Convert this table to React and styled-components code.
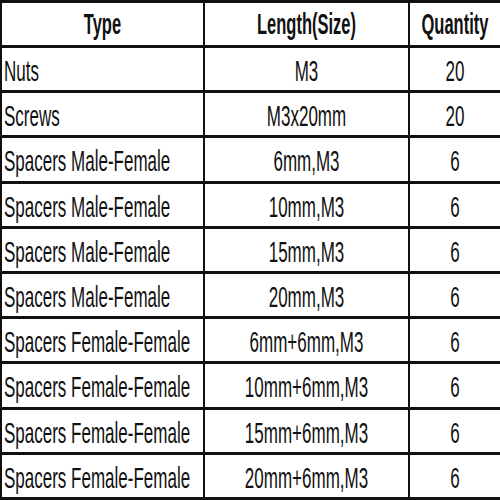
import React from 'react';
import styled, { createGlobalStyle } from 'styled-components';

const GlobalStyle = createGlobalStyle`
  html, body {
    margin: 0;
    padding: 0;
    background: #ffffff;
  }
`;

const Table = styled.table`
  width: 500px;
  height: 500px;
  border-collapse: separate;
  border-spacing: 0;
  border-top: 3px solid #111111;
  border-left: 2px solid #111111;
  table-layout: fixed;
  font-family: "Liberation Sans", Arial, sans-serif;
  color: #111111;
  background: #ffffff;
`;

const Cell = styled.td`
  border-bottom: 3px solid #111111;
  border-right: 2px solid #111111;
  padding: 0 0 0 ${(p) => (p.$align === 'left' ? '2px' : '0')};
  text-align: ${(p) => p.$align || 'center'};
  vertical-align: middle;
  white-space: nowrap;
  overflow: visible;
  height: 42px;
`;

const HeadCell = styled(Cell).attrs({ as: 'th' })`
  font-weight: bold;
`;

const Text = styled.span`
  display: inline-block;
  font-size: ${(p) => (p.$head ? '16.5px' : '17px')};
  line-height: 1;
  transform: translateY(${(p) => (p.$head ? '1px' : '3px')}) scaleY(1.75);
  transform-origin: center;
`;

const rows = [
  ['Nuts', 'M3', '20'],
  ['Screws', 'M3x20mm', '20'],
  ['Spacers Male-Female', '6mm,M3', '6'],
  ['Spacers Male-Female', '10mm,M3', '6'],
  ['Spacers Male-Female', '15mm,M3', '6'],
  ['Spacers Male-Female', '20mm,M3', '6'],
  ['Spacers Female-Female', '6mm+6mm,M3', '6'],
  ['Spacers Female-Female', '10mm+6mm,M3', '6'],
  ['Spacers Female-Female', '15mm+6mm,M3', '6'],
  ['Spacers Female-Female', '20mm+6mm,M3', '6'],
];

export default function App() {
  return (
    <>
      <GlobalStyle />
      <Table>
        <colgroup>
          <col style={{ width: 203 }} />
          <col style={{ width: 205 }} />
          <col style={{ width: 92 }} />
        </colgroup>
        <thead>
          <tr>
            <HeadCell><Text $head>Type</Text></HeadCell>
            <HeadCell><Text $head>Length(Size)</Text></HeadCell>
            <HeadCell><Text $head>Quantity</Text></HeadCell>
          </tr>
        </thead>
        <tbody>
          {rows.map((r, i) => (
            <tr key={i}>
              <Cell $align="left"><Text>{r[0]}</Text></Cell>
              <Cell><Text>{r[1]}</Text></Cell>
              <Cell><Text>{r[2]}</Text></Cell>
            </tr>
          ))}
        </tbody>
      </Table>
    </>
  );
}
